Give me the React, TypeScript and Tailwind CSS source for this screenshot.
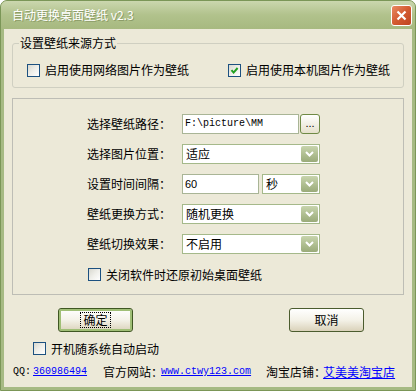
import React from "react";

const mono = "font-['Liberation_Mono',monospace] text-[10px]";

function CheckBox({ checked }: { checked?: boolean }) {
  return (
    <span className="flex h-[13px] w-[13px] shrink-0 items-center justify-center border border-[#1c5180] bg-linear-to-br from-[#d8d8cf] via-[#efefea] to-white">
      {checked && (
        <svg width="11" height="11" viewBox="0 0 11 11">
          <path d="M2.5 5.2 L4.6 7.6 L8.6 3" stroke="#21a121" strokeWidth="2" fill="none" />
        </svg>
      )}
    </span>
  );
}

function Chevron() {
  return (
    <span className="flex h-full w-[17px] items-center justify-center rounded-[2px] bg-linear-to-b from-[#c8d4ad] to-[#9aab79]">
      <svg width="9" height="6" viewBox="0 0 9 6">
        <path d="M1 1 L4.5 4.5 L8 1" stroke="white" strokeWidth="2" fill="none" />
      </svg>
    </span>
  );
}

function Select({ value, className }: { value: string; className: string }) {
  return (
    <div className={`flex h-[20px] items-stretch border border-[#a5b98a] bg-white p-[1px] ${className}`}>
      <span className="flex flex-1 items-center pl-[2px]">{value}</span>
      <Chevron />
    </div>
  );
}

function Row({ label, children }: { label: string; children: React.ReactNode }) {
  return (
    <div className="flex h-[20px] items-center">
      <span className="w-[95px]">{label}</span>
      {children}
    </div>
  );
}

export default function App() {
  return (
    <div className="flex h-[391px] w-[416px] flex-col rounded-t-[7px] border border-[#7b9657] bg-[#a6ba83] font-['Noto_Sans_CJK_SC',sans-serif] text-[12px] leading-[14px] text-black">
      {/* title bar */}
      <div className="flex h-[28px] shrink-0 items-center justify-between rounded-t-[6px] bg-linear-to-b from-[#cbd7ae] via-[#b1c28c] to-[#a7b980] pl-[11px] pr-[3px]">
        <span className="text-white [text-shadow:1px_1px_0_#8c9c68]">自动更换桌面壁纸 v2.3</span>
        <span className="flex h-[21px] w-[21px] items-center justify-center rounded-[3px] border border-white bg-linear-to-br from-[#e98a62] via-[#d35a30] to-[#bf4420]">
          <svg width="11" height="11" viewBox="0 0 11 11">
            <path d="M1.5 1.5 L9.5 9.5 M9.5 1.5 L1.5 9.5" stroke="white" strokeWidth="2.2" />
          </svg>
        </span>
      </div>

      <div className="mx-[3px] mb-[3px] flex flex-1 flex-col bg-[#ece9d8]">
        {/* source group */}
        <div className="relative ml-[8px] mt-[14px] h-[45px] w-[392px] rounded-[3px] border border-[#cfcfc1] pl-[14px] pt-[19px]">
          <span className="absolute left-[6px] top-[-8px] bg-[#ece9d8] px-[1px]">设置壁纸来源方式</span>
          <div className="flex items-center">
            <label className="flex w-[201px] items-center gap-[5px]">
              <CheckBox />
              <span>启用使用网络图片作为壁纸</span>
            </label>
            <label className="flex items-center gap-[5px]">
              <CheckBox checked />
              <span>启用使用本机图片作为壁纸</span>
            </label>
          </div>
        </div>

        {/* settings group */}
        <div className="ml-[8px] mt-[10px] flex h-[197px] w-[392px] flex-col border border-[#bdbdb5] pl-[74px] pt-[15px]">
          <div className="flex flex-col gap-[10px]">
            <Row label="选择壁纸路径：">
              <div className="flex h-[20px] w-[117px] items-center border border-[#a9b596] bg-white pl-[2px]">
                <span className={mono}>F:\picture\MM</span>
              </div>
              <button className="ml-[1px] flex h-[20px] w-[20px] items-end justify-center rounded-[3px] border border-[#6f8a45] bg-linear-to-b from-white to-[#e6e1cc] pb-[4px] font-['Liberation_Sans',sans-serif] text-[11px] leading-none">
                ...
              </button>
            </Row>
            <Row label="选择图片位置：">
              <Select value="适应" className="w-[138px]" />
            </Row>
            <Row label="设置时间间隔：">
              <div className="flex h-[20px] w-[77px] items-center border border-[#a9b596] bg-white pl-[2px] font-['Liberation_Sans',sans-serif] text-[11px]">
                60
              </div>
              <Select value="秒" className="ml-[3px] w-[58px]" />
            </Row>
            <Row label="壁纸更换方式：">
              <Select value="随机更换" className="w-[138px]" />
            </Row>
            <Row label="壁纸切换效果：">
              <Select value="不启用" className="w-[138px]" />
            </Row>
          </div>
          <label className="ml-[1px] mt-[14px] flex h-[13px] items-center gap-[5px]">
            <CheckBox />
            <span>关闭软件时还原初始桌面壁纸</span>
          </label>
        </div>

        {/* buttons */}
        <div className="mt-[13px] flex h-[24px]">
          <button className="ml-[54px] flex w-[75px] items-center justify-center rounded-[3px] border border-[#3f5722] bg-linear-to-b from-white via-[#f4f2e8] to-[#dad2ba] shadow-[inset_0_0_0_2px_#a0bf76]">
            <span className="border border-dotted border-black px-[2px]">确定</span>
          </button>
          <button className="ml-[156px] flex w-[75px] items-center justify-center rounded-[3px] border border-[#4b5c2e] bg-linear-to-b from-white via-[#f4f2e8] to-[#dad2ba]">
            取消
          </button>
        </div>

        <label className="ml-[29px] mt-[10px] flex h-[13px] items-center gap-[5px]">
          <CheckBox />
          <span>开机随系统自动启动</span>
        </label>

        {/* footer */}
        <div className="ml-[9px] mt-[10px] flex items-center">
          <span className={mono}>QQ:</span>
          <a className={`${mono} ml-[2px] text-[#0000ff] underline`}>360986494</a>
          <span className="ml-[16px]">官方网站：</span>
          <a className={`${mono} ml-[-2px] text-[#0000ff] underline`}>www.ctwy123.com</a>
          <span className="ml-[15px]">淘宝店铺：</span>
          <a className="ml-[-3px] text-[#0000ff] underline">艾美美淘宝店</a>
        </div>
      </div>
    </div>
  );
}
